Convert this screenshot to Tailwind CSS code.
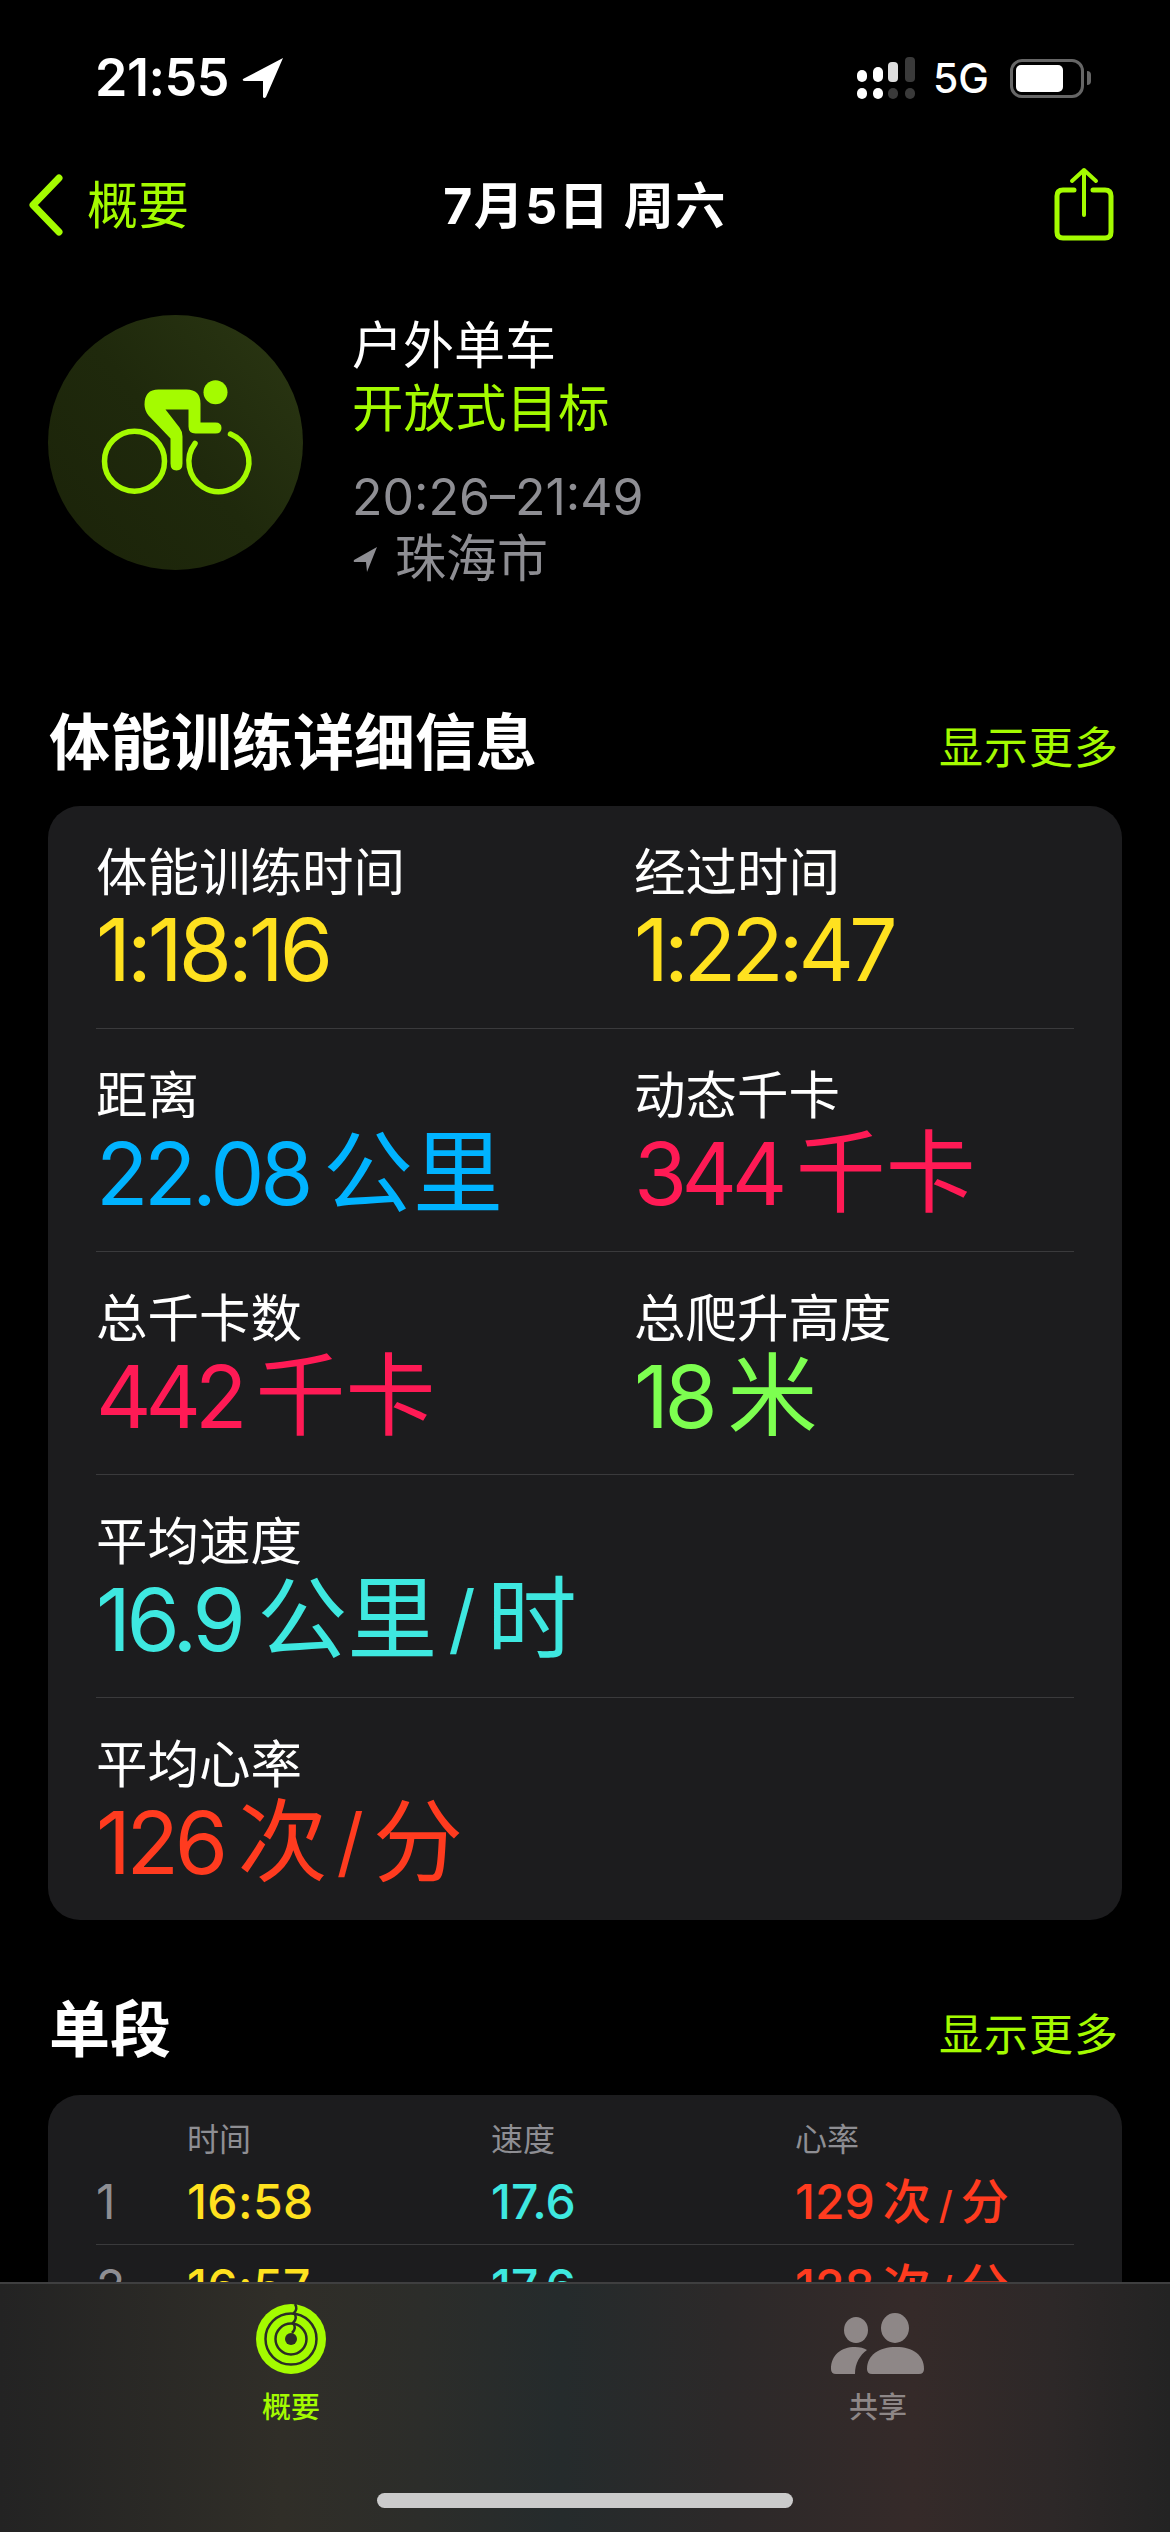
<!DOCTYPE html>
<html lang="zh">
<head>
<meta charset="utf-8">
<title>体能训练详细信息</title>
<script src="https://cdn.jsdelivr.net/npm/@tailwindcss/browser@4"></script>
</head>
<body class="bg-black">
<div class="relative w-[1170px] h-[2532px] overflow-hidden bg-black text-white font-['Inter','Noto_Sans_CJK_SC',sans-serif]">

  <!-- status bar -->
  <div class="h-[150px] flex items-start justify-between pl-[95px] pr-[79px] pt-[46px]">
    <div class="flex items-center gap-[13px] h-[64px]">
      <span class="text-[52px] leading-[64px] font-semibold tracking-[-0.5px]">21:55</span>
      <svg width="42" height="42" viewBox="0 0 42 42" fill="#fff"><path d="M41 1 L1 22 Q0 24 3 24 L21 24 L21 40 Q22 42 24 40 Z"/></svg>
    </div>
    <div class="flex items-center h-[64px]">
      <svg width="62" height="44" viewBox="0 0 62 44" class="mr-[14px]">
        <rect x="0" y="14" width="10" height="12" rx="5" fill="#fff"/>
        <rect x="16" y="11" width="10" height="15" rx="5" fill="#fff"/>
        <rect x="31" y="6" width="10" height="20" rx="4" fill="#ddd"/>
        <rect x="48" y="1" width="10" height="25" rx="4" fill="#3a3a3a"/>
        <rect x="0" y="32" width="10" height="11" rx="5" fill="#fff"/>
        <rect x="16" y="32" width="10" height="11" rx="5" fill="#fff"/>
        <rect x="31" y="32" width="10" height="11" rx="5" fill="#3a3a3a"/>
        <rect x="48" y="32" width="10" height="11" rx="5" fill="#3a3a3a"/>
      </svg>
      <span class="text-[41px] leading-[64px] font-medium">5G</span>
      <div class="ml-[21px] w-[74px] h-[39px] rounded-[12px] border-[3px] border-[#666] p-[3px]">
        <div class="w-[47px] h-full rounded-[5px] bg-white"></div>
      </div>
      <div class="ml-[3px] w-[4px] h-[14px] rounded-r-[4px] bg-[#666]"></div>
    </div>
  </div>

  <!-- nav bar -->
  <div class="relative h-[110px] flex items-center justify-between pl-[28px] pr-[56px] text-[#a4fb00]">
    <div class="flex items-center gap-[23px]">
      <svg width="36" height="62" viewBox="0 0 36 62" fill="none" stroke="#a4fb00" stroke-width="7" stroke-linecap="round" stroke-linejoin="round"><path d="M31 4 L5 31 L31 58"/></svg>
      <span class="mt-[2px] text-[51px] leading-[60px]">概要</span>
    </div>
    <div class="absolute left-0 right-0 mt-[2px] text-center text-white text-[50px] leading-[60px] font-bold tracking-[1.5px]">7月5日 周六</div>
    <svg width="60" height="76" viewBox="0 0 60 76" fill="none" stroke="#a4fb00" stroke-linecap="round" stroke-linejoin="round">
      <path d="M20 23 H9 Q3 23 3 29 V65 Q3 71 9 71 H51 Q57 71 57 65 V29 Q57 23 51 23 H39" stroke-width="5"/>
      <path d="M30 3 V48 M18 14 L30 3 L42 14" stroke-width="4"/>
    </svg>
  </div>

  <!-- workout heading -->
  <div class="mt-[55px] ml-[48px] h-[255px] flex gap-[49px]">
    <div class="w-[255px] h-[255px] rounded-full bg-[linear-gradient(50deg,#1b2309_0%,#1f290c_50%,#2b3713_100%)] flex items-center justify-center">
      <svg width="160" height="140" viewBox="55.5 62.5 160 140" fill="none">
        <circle cx="175" cy="81.7" r="12" fill="#a4fb00"/>
        <path d="M118 79 L146 79 Q160 79 160 93 L160 112 L175 112 Q181 112 181 117.5 Q181 123 175 123 L155 123 Q148 123 148 116 L148 99 L125 99 L139 117 Q142 121 142 126 L142 153 Q142 160 136 160 Q130 160 130 153 L130 128 L108 105 Q104 100 104 94 Q104 79 118 79 Z" fill="#a4fb00"/>
        <circle cx="94" cy="150.7" r="30" stroke="#a4fb00" stroke-width="5.5"/>
        <path d="M154.5 133 A30 30 0 1 0 190 123.5" stroke="#a4fb00" stroke-width="5.5" stroke-linecap="round"/>
      </svg>
    </div>
    <div>
      <div class="text-[51px] leading-[62px]">户外单车</div>
      <div class="text-[51.5px] leading-[62px] text-[#a4fb00]">开放式目标</div>
      <div class="mt-[28px] text-[50px] leading-[61px] text-[#8e8e93]">20:26–21:49</div>
      <div class="flex items-center text-[51px] leading-[61px] text-[#8e8e93]">
        <svg width="24" height="26" viewBox="0 0 24 26" fill="#8e8e93" class="mr-[18px] ml-[1px]"><path d="M24 1 L1 14 Q0 16 2 16 L13 16 L14 26 Z"/></svg>
        <span>珠海市</span>
      </div>
    </div>
  </div>

  <!-- workout details -->
  <div class="mt-[123px] mx-[48px] h-[100px] flex items-center justify-between pl-[1px] pr-[3px]">
    <h2 class="text-[61px] font-bold leading-[72px]">体能训练详细信息</h2>
    <span class="mt-[10px] text-[44px] leading-[54px] text-[#a4fb00] tracking-[1px]">显示更多</span>
  </div>
  <div class="mt-[13px] mx-[48px] rounded-[32px] bg-[#1c1c1e] px-[48px]">
    <div class="h-[222px] grid grid-cols-[538px_1fr] pt-[36px]">
      <div>
        <div class="text-[51.5px] leading-[60px]">体能训练时间</div>
        <div class="mt-[4px] text-[86px] leading-[88px] text-[#ffe11f] tracking-[-4px]">1:18:16</div>
      </div>
      <div>
        <div class="text-[51.5px] leading-[60px]">经过时间</div>
        <div class="mt-[4px] text-[86px] leading-[88px] text-[#ffe11f] tracking-[-5px]">1:22:47</div>
      </div>
    </div>
    <div class="h-[223px] grid grid-cols-[538px_1fr] pt-[36px] border-t border-[#3a3a3c]">
      <div>
        <div class="text-[51.5px] leading-[60px]">距离</div>
        <div class="mt-[4px] text-[86px] leading-[88px] text-[#00b3ff]"><span class="tracking-[-4.4px]">22.08</span><span class="ml-[14px] text-[90px]">公里</span></div>
      </div>
      <div>
        <div class="text-[51.5px] leading-[60px]">动态千卡</div>
        <div class="mt-[4px] text-[86px] leading-[88px] text-[#ff1a55]"><span class="tracking-[-5.5px]">344</span><span class="ml-[14px] text-[90px]">千卡</span></div>
      </div>
    </div>
    <div class="h-[223px] grid grid-cols-[538px_1fr] pt-[36px] border-t border-[#3a3a3c]">
      <div>
        <div class="text-[51.5px] leading-[60px]">总千卡数</div>
        <div class="mt-[4px] text-[86px] leading-[88px] text-[#ff1a55]"><span class="tracking-[-6px]">442</span><span class="ml-[14px] text-[90px]">千卡</span></div>
      </div>
      <div>
        <div class="text-[51.5px] leading-[60px]">总爬升高度</div>
        <div class="mt-[4px] text-[86px] leading-[88px] text-[#7dff50]"><span class="tracking-[-4.4px]">18</span><span class="ml-[14px] text-[90px]">米</span></div>
      </div>
    </div>
    <div class="h-[223px] pt-[36px] border-t border-[#3a3a3c]">
      <div class="text-[51.5px] leading-[60px]">平均速度</div>
      <div class="mt-[4px] text-[86px] leading-[88px] text-[#3ee8e0]"><span class="tracking-[-4.4px]">16.9</span><span class="ml-[16px] text-[90px]">公里</span><span class="inline-block mx-[11px] text-[76px] leading-[76px] -translate-y-[5px]">/</span><span class="text-[90px]">时</span></div>
    </div>
    <div class="h-[223px] pt-[36px] border-t border-[#3a3a3c]">
      <div class="text-[51.5px] leading-[60px]">平均心率</div>
      <div class="mt-[4px] text-[86px] leading-[88px] text-[#ff3b1f]"><span class="tracking-[-4.4px]">126</span><span class="ml-[14px] text-[90px]">次</span><span class="inline-block mx-[9px] text-[76px] leading-[76px] -translate-y-[5px]">/</span><span class="text-[90px]">分</span></div>
    </div>
  </div>

  <!-- splits -->
  <div class="mt-[60px] mx-[48px] h-[100px] flex items-center justify-between pl-[1px] pr-[3px]">
    <h2 class="text-[61px] font-bold leading-[72px]">单段</h2>
    <span class="mt-[10px] text-[44px] leading-[54px] text-[#a4fb00] tracking-[1px]">显示更多</span>
  </div>
  <div class="mt-[15px] mx-[48px] rounded-[32px] bg-[#1c1c1e] px-[48px]">
    <div class="grid grid-cols-[91px_304px_304px_1fr] pt-[25px] h-[149px] content-start">
      <div></div>
      <div class="text-[32px] leading-[40px] text-[#8e8e93]">时间</div>
      <div class="text-[32px] leading-[40px] text-[#8e8e93]">速度</div>
      <div class="text-[32px] leading-[40px] text-[#8e8e93]">心率</div>
      <div class="mt-[14px] text-[48px] leading-[56px] text-[#8e8e93]">1</div>
      <div class="mt-[14px] text-[48px] leading-[56px] text-[#ffe11f] font-medium tracking-[0.4px]">16:58</div>
      <div class="mt-[14px] text-[48px] leading-[56px] text-[#3ee8e0] font-medium">17.6</div>
      <div class="mt-[14px] text-[48px] leading-[56px] text-[#ff3b1f] font-medium"><span>129</span><span class="ml-[8px]">次</span><span class="mx-[8px] text-[38px]">/</span><span>分</span></div>
    </div>
    <div class="grid grid-cols-[91px_304px_304px_1fr] border-t border-[#3a3a3c] pt-[14px] h-[96px]">
      <div class="text-[48px] leading-[56px] text-[#8e8e93]">2</div>
      <div class="text-[48px] leading-[56px] text-[#ffe11f] font-medium tracking-[0.4px]">16:57</div>
      <div class="text-[48px] leading-[56px] text-[#3ee8e0] font-medium">17.6</div>
      <div class="text-[48px] leading-[56px] text-[#ff3b1f] font-medium"><span>128</span><span class="ml-[8px]">次</span><span class="mx-[8px] text-[38px]">/</span><span>分</span></div>
    </div>
  </div>

  <!-- tab bar, sits over the scrolling content -->
  <div class="absolute left-0 right-0 bottom-0 h-[250px] border-t-2 border-[#3f3f40] bg-[linear-gradient(90deg,#232323_0%,#302e28_24%,#2c2d2a_36%,#252b2c_48%,#2c2929_62%,#352a29_78%,#2d2828_90%,#232323_100%)]">
    <div class="absolute left-[200px] top-[19px] w-[182px] flex flex-col items-center">
      <svg width="72" height="72" viewBox="0 0 72 72" fill="none">
        <circle cx="36" cy="36" r="35" fill="#a4fb00"/>
        <circle cx="36" cy="36" r="25.5" stroke="#2b2c27" stroke-width="2.5"/>
        <circle cx="36" cy="36" r="15.5" stroke="#2b2c27" stroke-width="2.5"/>
        <circle cx="36" cy="36" r="6" fill="#2b2c27"/>
        <path d="M40 1 Q43 6 39 10 Q43 15 38 20 Q42 25 37 30" stroke="#2b2c27" stroke-width="2.5"/>
      </svg>
      <div class="mt-[14px] text-[29px] leading-[38px] font-medium text-[#a4fb00]">概要</div>
    </div>
    <div class="absolute left-[787px] top-[19px] w-[182px] flex flex-col items-center">
      <svg width="94" height="72" viewBox="0 0 94 72" fill="#8e8787">
        <ellipse cx="25" cy="27" rx="12" ry="13"/>
        <ellipse cx="64" cy="25" rx="14" ry="15"/>
        <path d="M0 66 C0 52 10 44 24 44 C29 44 33 45 36 47 C29 52 24 60 24 71 L5 71 Q0 71 0 66 Z"/>
        <path d="M36 66 C36 52 48 44 65 44 C82 44 93 52 93 66 Q93 71 88 71 L41 71 Q36 71 36 66 Z"/>
      </svg>
      <div class="mt-[14px] text-[29px] leading-[38px] font-medium text-[#8e8787]">共享</div>
    </div>
    <div class="absolute left-[377px] bottom-[24px] w-[416px] h-[15px] rounded-full bg-[#cbcbcb]"></div>
  </div>

</div>
</body>
</html>
